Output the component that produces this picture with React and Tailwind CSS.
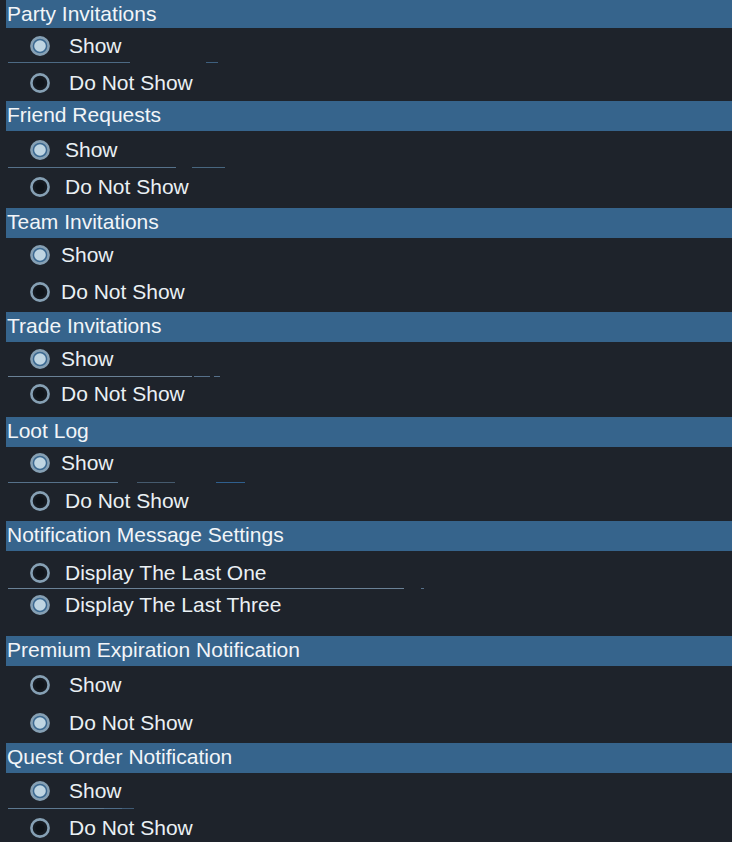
const sections = [
  {
    title: 'Party Invitations',
    first: true,
    body: 'h-[73px]',
    rows: [
      { label: 'Show', checked: true, mt: 'mt-[6px]', gap: 'ml-[19px]' },
      { label: 'Do Not Show', checked: false, mt: 'mt-[8px]', gap: 'ml-[19px]' },
    ],
    line: { mt: 'mt-[4px]', segs: [[8, 122, 'bg-[#4d6a84]'], [206, 12, 'bg-[#3e5f7e]']] },
  },
  {
    title: 'Friend Requests',
    body: 'h-[77px]',
    rows: [
      { label: 'Show', checked: true, mt: 'mt-[7px]', gap: 'ml-[15px]' },
      { label: 'Do Not Show', checked: false, mt: 'mt-[7px]', gap: 'ml-[15px]' },
    ],
    line: { mt: 'mt-[5px]', segs: [[8, 168, 'bg-[#56718a]'], [192, 33, 'bg-[#48667f]']] },
  },
  {
    title: 'Team Invitations',
    body: 'h-[74px]',
    rows: [
      { label: 'Show', checked: true, mt: 'mt-[5px]', gap: 'ml-[11px]' },
      { label: 'Do Not Show', checked: false, mt: 'mt-[12px]', gap: 'ml-[11px]' },
    ],
  },
  {
    title: 'Trade Invitations',
    body: 'h-[75px]',
    rows: [
      { label: 'Show', checked: true, mt: 'mt-[5px]', gap: 'ml-[11px]' },
      { label: 'Do Not Show', checked: false, mt: 'mt-[5px]', gap: 'ml-[11px]' },
    ],
    line: { mt: 'mt-[5px]', segs: [[8, 184, 'bg-[#6a8196]'], [194, 16, 'bg-[#56708a]'], [214, 6, 'bg-[#56708a]']] },
  },
  {
    title: 'Loot Log',
    body: 'h-[74px]',
    rows: [
      { label: 'Show', checked: true, mt: 'mt-[4px]', gap: 'ml-[11px]' },
      { label: 'Do Not Show', checked: false, mt: 'mt-[6px]', gap: 'ml-[15px]' },
    ],
    line: { mt: 'mt-[7px]', segs: [[8, 110, 'bg-[#56718a]'], [137, 38, 'bg-[#455a6e]'], [216, 29, 'bg-[#2f5f8e]']] },
  },
  {
    title: 'Notification Message Settings',
    body: 'h-[85px]',
    rows: [
      { label: 'Display The Last One', checked: false, mt: 'mt-[10px]', gap: 'ml-[15px]' },
      { label: 'Display The Last Three', checked: true, mt: 'mt-[4px]', gap: 'ml-[15px]' },
    ],
    line: { mt: 'mt-[3px]', segs: [[8, 396, 'bg-[#6a8196]'], [421, 3, 'bg-[#56708a]']] },
  },
  {
    title: 'Premium Expiration Notification',
    body: 'h-[77px]',
    rows: [
      { label: 'Show', checked: false, mt: 'mt-[7px]', gap: 'ml-[19px]' },
      { label: 'Do Not Show', checked: true, mt: 'mt-[13px]', gap: 'ml-[19px]' },
    ],
  },
  {
    title: 'Quest Order Notification',
    body: 'h-[69px]',
    rows: [
      { label: 'Show', checked: true, mt: 'mt-[6px]', gap: 'ml-[19px]' },
      { label: 'Do Not Show', checked: false, mt: 'mt-[7px]', gap: 'ml-[19px]' },
    ],
    line: { mt: 'mt-[5px]', segs: [[8, 96, 'bg-[#5d7890]'], [104, 18, 'bg-[#4e6c88]'], [122, 12, 'bg-[#3f5a74]']] },
  },
]

// game-style radio: light ring, pale dot when on, dark well when off
function Radio({ checked }) {
  return (
    <svg width="20" height="20" viewBox="0 0 20 20" className="shrink-0">
      <circle cx="10" cy="10" r="8.6" fill={checked ? '#3b6890' : '#161b22'} stroke="#86a0b4" strokeWidth="2.6" />
      {checked ? (
        <circle cx="10" cy="10" r="5.8" fill="#bfd5e2" />
      ) : (
        <circle cx="10" cy="10" r="4.6" fill="#10151b" />
      )}
    </svg>
  )
}

function Row({ row }) {
  return (
    <div className={`flex h-[24px] shrink-0 items-center pl-[30px] ${row.mt}`}>
      <Radio checked={row.checked} />
      <span className={`${row.gap} leading-[24px] text-[21px] text-[#eaf0f4]`}>{row.label}</span>
    </div>
  )
}

function Line({ line }) {
  return (
    <div className={`relative h-px shrink-0 ${line.mt}`}>
      {line.segs.map(([x, w, c], i) => (
        <div key={i} className={`absolute top-0 h-px ${c}`} style={{ left: x, width: w }} />
      ))}
    </div>
  )
}

export default function App() {
  return (
    <div className="w-[732px] h-[842px] overflow-hidden bg-[#1e232b]" style={{ fontFamily: '"Liberation Sans", Arial, sans-serif' }}>
      {sections.map(s => (
        <div key={s.title}>
          <div className={`ml-[6px] bg-[#36648c] pl-[1px] text-[21px] leading-[28px] text-[#f2f5f8] ${s.first ? 'h-[28px]' : 'h-[30px]'}`}>
            {s.title}
          </div>
          <div className={`flex flex-col ${s.body}`}>
            <Row row={s.rows[0]} />
            {s.line ? <Line line={s.line} /> : <div className="h-px shrink-0" />}
            <Row row={s.rows[1]} />
          </div>
        </div>
      ))}
    </div>
  )
}
